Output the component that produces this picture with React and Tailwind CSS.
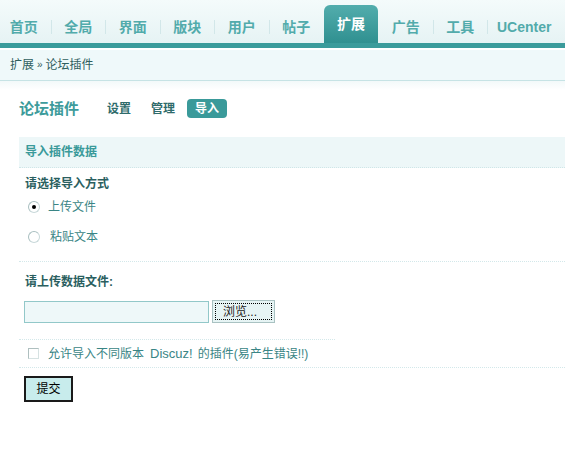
import React from 'react';

const NAV = ['首页', '全局', '界面', '版块', '用户', '帖子', '扩展', '广告', '工具', 'UCenter'];
const ACTIVE = '扩展';

const Radio = ({ checked }) => (
    <span className="w-[12px] h-[12px] rounded-full border border-[#c9d9da] border-t-[#a9bfc0] border-l-[#a9bfc0] bg-white flex items-center justify-center shrink-0">
        {checked && <span className="w-[4px] h-[4px] rounded-full bg-black"></span>}
    </span>
);

const App = () => {
    return (
        <div className="w-full min-h-[475px] bg-white text-[12px] font-['Liberation_Sans','Noto_Sans_CJK_SC',sans-serif]">
            {/* TOP NAV */}
            <div className="h-[43px] bg-gradient-to-b from-[#f4fbfb] to-[#e6f3f4] flex items-end overflow-hidden">
                <div className="flex items-end -ml-[3px]">
                    {NAV.map((item, i) => {
                        const isActive = item === ACTIVE;
                        const nextActive = NAV[i + 1] === ACTIVE;
                        const isLast = i === NAV.length - 1;
                        return (
                            <React.Fragment key={item}>
                                {isActive ? (
                                    <div className="w-[54px] h-[38px] rounded-t-[6px] bg-gradient-to-b from-[#52adad] to-[#2f9090] flex items-center justify-center text-white font-bold text-[14px] leading-[16px] pb-[1px]">
                                        {item}
                                    </div>
                                ) : isLast ? (
                                    <div className="h-[38px] flex items-center pl-[9px] pt-[6px] text-[#52abab] font-bold text-[14px] leading-[16px] whitespace-nowrap">
                                        {item}
                                    </div>
                                ) : (
                                    <div className="w-[53.5px] h-[38px] flex items-center justify-center pt-[6px] text-[#52abab] font-bold text-[14px] leading-[16px] whitespace-nowrap">
                                        {item}
                                    </div>
                                )}
                                {!isLast && (
                                    <div className="w-px h-[38px] flex items-center pt-[6px]">
                                        {!isActive && !nextActive && <div className="w-px h-[14px] bg-[#d2e7e9]"></div>}
                                    </div>
                                )}
                            </React.Fragment>
                        );
                    })}
                </div>
            </div>
            <div className="h-[5px] bg-[#3a9b9b]"></div>
            <div className="h-[2px] bg-white"></div>

            {/* BREADCRUMB */}
            <div className="h-[31px] bg-[#eff9fa] border-b border-[#c6e3e5] flex items-center pl-[10px] text-[#2f5e5e] leading-[16px]">
                <span>扩展</span>
                <span className="mx-[3px] text-[10px]">»</span>
                <span>论坛插件</span>
            </div>
            <div className="h-[9px] bg-gradient-to-b from-[#f2f9fa] to-white"></div>

            {/* CONTENT */}
            <div className="pl-[19px] pt-[9px]">
                <div className="h-[19px] flex items-center">
                    <span className="text-[15px] leading-[17px] font-bold text-[#3d9b9b]">论坛插件</span>
                    <div className="flex items-center gap-[4px] ml-[20px]">
                        <span className="px-[8px] h-[19px] flex items-center font-bold text-[#2f6b6b]">设置</span>
                        <span className="px-[8px] h-[19px] flex items-center font-bold text-[#2f6b6b]">管理</span>
                        <span className="px-[8px] h-[19px] flex items-center font-bold text-white bg-[#3a9a9a] rounded-[4px]">导入</span>
                    </div>
                </div>

                <div className="mt-[19px] h-[31px] bg-[#edf7f8] border-b border-dotted border-[#cfe6e8] flex items-center pl-[6px] font-bold text-[#3a9a9a] leading-[16px]">
                    导入插件数据
                </div>

                {/* IMPORT METHOD */}
                <div className="pt-[9px] pb-[9px] border-b border-dotted border-[#d3e8ea] pl-[6px]">
                    <div className="leading-[15px] font-bold text-[#2b5f5f]">请选择导入方式</div>
                    <div className="h-[30px] flex items-center pl-[3px]">
                        <Radio checked />
                        <span className="ml-[8px] text-[#3a8585] leading-[16px]">上传文件</span>
                    </div>
                    <div className="h-[30px] flex items-center pl-[3px]">
                        <Radio />
                        <span className="ml-[10px] text-[#3a8585] leading-[16px]">粘贴文本</span>
                    </div>
                </div>

                {/* FILE */}
                <div className="w-[316px] pt-[12px] pb-[16px] border-b border-dotted border-[#d3e8ea] pl-[6px]">
                    <div className="leading-[16px] font-bold text-[#2b5f5f]">请上传数据文件:</div>
                    <div className="mt-[10px] flex items-center -ml-[1px]">
                        <div className="w-[185px] h-[22px] bg-[#eef8f9] border border-[#92c8c9]"></div>
                        <div className="ml-[3px] w-[63px] h-[23px] bg-[#e6f4f4] border border-[#a9c2c2] p-[2px]">
                            <div className="w-full h-full border border-dotted border-black flex items-center pl-[7px] text-[#222] leading-[14px]">浏览...</div>
                        </div>
                    </div>
                </div>

                {/* ALLOW */}
                <div className="h-[28px] border-b border-dotted border-[#d3e8ea] flex items-center pl-[9px] text-[#3a8585]">
                    <span className="w-[11px] h-[11px] border border-[#d6e2e2] border-t-[#aebfbf] border-l-[#aebfbf] bg-white shrink-0"></span>
                    <span className="ml-[9px] leading-[16px]">允许导入不同版本</span>
                    <span className="ml-[6px] text-[13px] leading-[16px]">Discuz!</span>
                    <span className="ml-[5px] leading-[16px]">的插件(易产生错误!!)</span>
                </div>

                <div className="pt-[8px] pl-[5px]">
                    <button className="w-[49px] h-[26px] bg-[#c8ecec] border-2 border-[#1a1a1a] text-black text-[12px] leading-[14px] flex items-center justify-center">
                        提交
                    </button>
                </div>
            </div>
        </div>
    );
};

export default App;
